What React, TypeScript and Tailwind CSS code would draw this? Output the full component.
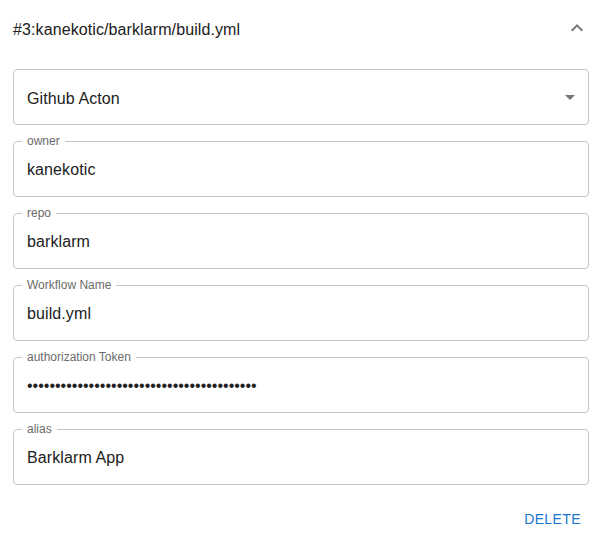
import React from "react";

function Field({ label, value, password }: { label: string; value: string; password?: boolean }) {
  return (
    <fieldset className="h-[62px] border border-[#c4c4c4] rounded-[4px] px-[8px] m-0 min-w-0">
      <legend className="px-[5px] text-[12px] leading-[12px] text-[#6b6b6b]">{label}</legend>
      <div className="pl-[5px] pt-[13px] text-[16px] leading-[19px] tracking-[0.1px] text-[#212121] whitespace-nowrap">
        {password ? <span className="tracking-normal">{"\u2022".repeat(41)}</span> : value}
      </div>
    </fieldset>
  );
}

export default function App() {
  return (
    <div
      className="w-[600px] h-[546px] bg-white overflow-hidden"
      style={{ fontFamily: '"Liberation Sans", Arial, sans-serif' }}
    >
      <div className="h-[56px] flex items-center justify-between pl-[13px] pr-[11px] pt-[2px]">
        <span className="text-[16px] leading-[19px] tracking-[0.1px] text-[#212121]">#3:kanekotic/barklarm/build.yml</span>
        <svg width="24" height="24" viewBox="0 0 24 24" className="fill-[#757575] -mt-[2px]">
          <path d="M12 8l-6 6 1.41 1.41L12 10.83l4.59 4.58L18 14z" />
        </svg>
      </div>
      <div className="pl-[13px] pr-[11px] pt-[13px] flex flex-col gap-[10px]">
        <div className="h-[56px] border border-[#c4c4c4] rounded-[4px] flex items-center justify-between pl-[13px] pr-[6px]">
          <span className="text-[16px] leading-[19px] tracking-[0.1px] text-[#212121] pt-[2px]">Github Acton</span>
          <svg width="24" height="24" viewBox="0 0 24 24" className="fill-[#757575]">
            <path d="M7 10l5 5 5-5z" />
          </svg>
        </div>
        <Field label="owner" value="kanekotic" />
        <Field label="repo" value="barklarm" />
        <Field label="Workflow Name" value="build.yml" />
        <Field label="authorization Token" value="" password />
        <Field label="alias" value="Barklarm App" />
      </div>
      <div className="flex justify-end pr-[11px] mt-[15px]">
        <button className="h-[36px] px-[8px] pt-[2px] text-[14px] font-medium tracking-[0.4px] uppercase text-[#1976d2]">
          Delete
        </button>
      </div>
    </div>
  );
}
